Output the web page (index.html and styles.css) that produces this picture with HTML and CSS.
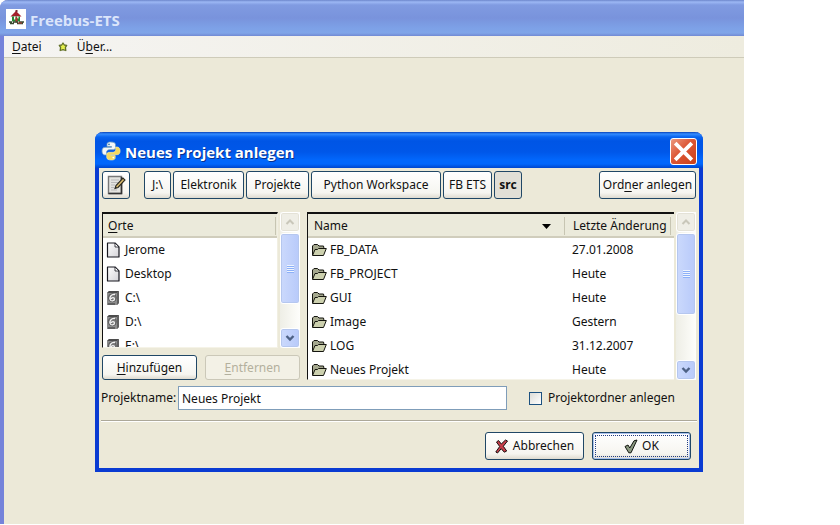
FILE: index.html
```html
<!DOCTYPE html>
<html lang="de">
<head>
<meta charset="utf-8">
<title>Freebus-ETS</title>
<link rel="stylesheet" href="styles.css">
</head>
<body>
<svg class="defs" aria-hidden="true">
  <linearGradient id="paper" x1="0" y1="0" x2="1" y2="1"><stop offset="0" stop-color="#fff"/><stop offset="1" stop-color="#d4d3d8"/></linearGradient>
  <symbol id="page" viewBox="0 0 14 16"><path d="M1.500 1H9l4 4v10H1.500z" fill="url(#paper)" stroke="#17171f" stroke-width="1.200" stroke-linejoin="round"/><path d="M9 1v4h4z" fill="#fff" stroke="#17171f" stroke-width=".8"/></symbol>
  <symbol id="disk" viewBox="0 0 14 16"><path d="M3 1h10v12l-2 2H1V3z" fill="#8c8c8c"/><path d="M1 3l2-2h10l-2 2z" fill="#4c4c4c"/><path d="M11 3l2-2v12l-2 2z" fill="#606060"/><circle cx="6.300" cy="7.800" r="4" fill="#777" stroke="#555" stroke-width=".8"/><path d="M9 4.500C5 4 3.400 7 4.200 9.600c.7 2 4.300 1.600 4.300-.6 0-1.900-3-1.800-3.300-.1" fill="none" stroke="#f3f3f3" stroke-width="1.300"/><path d="M2 14h7" stroke="#444" stroke-width="1.200"/></symbol>
  <symbol id="folder" viewBox="0 0 16 14"><path d="M1.500 12V3L3 1.500h3.500L8 3h4.500L13 5.500" fill="#a5a88e" stroke="#15150f" stroke-linejoin="round"/><path d="M1.500 12.500L4 6.500h2.500l1-1H15.300L12.500 12.500z" fill="#ccd0ae" stroke="#15150f" stroke-linejoin="round"/></symbol>
  <symbol id="up" viewBox="0 0 10 8"><path d="M1.500 6L5 2.500 8.500 6" fill="none" stroke="#c9c7ba" stroke-width="2"/></symbol>
  <symbol id="down" viewBox="0 0 10 8"><path d="M1.500 2L5 5.500 8.500 2" fill="none" stroke="#4d6185" stroke-width="2.400"/></symbol>
</svg>
<div class="app">
  <header class="app-title">
    <svg class="app-logo" viewBox="0 0 20 20" aria-hidden="true"><path fill="#fff" d="M0 0h20v20H0z"/><path d="M4.500 7.500L10 2l5.500 5.500z" fill="#a51f2c"/><path d="M9.500 1h2v2h-2z" fill="#7d2630"/><path d="M6 7.500h8v5H6z" fill="#258a32"/><path d="M8 7.500h1.500v3H8zM11 7.500h1.500v2H11z" fill="#fff"/><path d="M9.500 8.500h2v5h-2z" fill="#b92b31"/><path d="M3 13h3m1 0h5m1 0h5M4 14.500h4m3 0h6" stroke="#3b4931" stroke-width="1.300"/><path d="M12 14h4" stroke="#c13f37"/></svg>
    <h1>Freebus-ETS</h1>
  </header>
  <nav class="menu">
    <button type="button"><u>D</u>atei</button>
    <button type="button" class="about"><svg class="star" viewBox="0 0 10 10" aria-hidden="true"><path d="M5 1l1.300 2 2.400.4-1.300 2L7.800 8.500 5 7.700 2.200 8.500l.4-3.100-1.300-2L3.700 3z" fill="#e4f04c" stroke="#62702a" stroke-width="1.300" stroke-linejoin="round"/></svg><span>Ü<u>b</u>er...</span></button>
  </nav>
  <main class="workspace">
    <section class="dialog" role="dialog" aria-labelledby="dialog-title">
      <header class="dialog-title">
        <svg class="python" viewBox="0 0 20 20" aria-hidden="true"><path d="M9.800 1C6.500 1 6 2.300 6 3.500V5.500h4.500v.8H4C2 6.300 1 8 1 10s1 4 2.800 4H5.500v-2.500c0-1.600 1.200-2.800 2.800-2.800h4c1.300 0 2.200-1 2.200-2.200v-3C14.500 1.800 12.500 1 9.800 1z" fill="#f3f6f8" stroke="#6f9cc0" stroke-width=".8"/><path d="M10.400 19c3.300 0 3.800-1.300 3.800-2.500v-2H9.700v-.8h6.500c2 0 2.900-1.700 2.900-3.700s-1-4-2.800-4h-1.600v2.500c0 1.600-1.200 2.800-2.800 2.800h-4c-1.300 0-2.200 1-2.200 2.200v3c0 1.700 2 2.500 4.700 2.500z" fill="#f5d95e" stroke="#fff3ac" stroke-width=".6"/><circle cx="8" cy="3.300" r=".9" fill="#397ab0"/><circle cx="12.300" cy="16.600" r=".9" fill="#fff"/></svg>
        <h2 id="dialog-title">Neues Projekt anlegen</h2>
        <button type="button" class="close" aria-label="Schließen"><svg viewBox="0 0 24 24" aria-hidden="true"><path d="M4 4l16 16M20 4L4 20" stroke="#fff" stroke-width="3.600"/></svg></button>
      </header>
      <form class="dialog-body">
        <div class="toolbar">
          <button type="button" class="btn edit" aria-label="Dateiname eingeben"><svg viewBox="0 0 20 20" aria-hidden="true"><path d="M2.500 1.500h13v17h-13z" fill="#e4e4e0" stroke="#777" stroke-width="1.400"/><path d="M15.500 2v16.500h-13" fill="none" stroke="#333" stroke-width="1.600"/><path d="M5 5h8M5 7.500h7M5 10h4M5 12.500h3M5 15h6" stroke="#b9b9b9"/><path d="M9 13.500l1-3 7-7.500 2 2-7 7.500z" fill="#d7b96e" stroke="#282820" stroke-width="1.100"/><path d="M9 13.500l.6-2 1.400 1.300z" fill="#222"/></svg></button>
          <button type="button" class="btn p1">J:\</button>
          <button type="button" class="btn p2">Elektronik</button>
          <button type="button" class="btn p3">Projekte</button>
          <button type="button" class="btn p4">Python Workspace</button>
          <button type="button" class="btn p5">FB ETS</button>
          <button type="button" class="btn current">src</button>
          <button type="button" class="btn new-folder"><span>Ord<u>n</u>er anlegen</span></button>
        </div>
        <div class="panes">
          <div class="places">
            <div class="scroller">
              <div class="list">
                <table>
                  <thead><tr><th><span class="head"><span><u>O</u>rte</span></span></th></tr></thead>
                  <tbody>
                    <tr><td><span class="item"><svg class="place-icon"><use href="#page"/></svg>Jerome</span></td></tr>
                    <tr><td><span class="item"><svg class="place-icon"><use href="#page"/></svg>Desktop</span></td></tr>
                    <tr><td><span class="item"><svg class="place-icon"><use href="#disk"/></svg>C:\</span></td></tr>
                    <tr><td><span class="item"><svg class="place-icon"><use href="#disk"/></svg>D:\</span></td></tr>
                    <tr><td><span class="item"><svg class="place-icon"><use href="#disk"/></svg>E:\</span></td></tr>
                  </tbody>
                </table>
              </div>
              <div class="scrollbar">
                <button type="button" class="step off" aria-label="Nach oben"><svg><use href="#up"/></svg></button>
                <div class="thumb short"><i></i></div>
                <button type="button" class="step end" aria-label="Nach unten"><svg><use href="#down"/></svg></button>
              </div>
            </div>
            <div class="place-actions">
              <button type="button" class="btn"><span><u>H</u>inzufügen</span></button>
              <button type="button" class="btn" disabled><span><u>E</u>ntfernen</span></button>
            </div>
          </div>
          <div class="scroller files">
            <div class="list">
              <table>
                <thead><tr><th><span class="head">Name<svg class="sort" viewBox="0 0 9 5" aria-hidden="true"><path d="M0 0h9L4.500 5z"/></svg></span></th><th class="date"><span class="head">Letzte Änderung</span></th></tr></thead>
                <tbody>
                  <tr><td><span class="item"><svg class="folder"><use href="#folder"/></svg>FB_DATA</span></td><td class="when">27.01.2008</td></tr>
                  <tr><td><span class="item"><svg class="folder"><use href="#folder"/></svg>FB_PROJECT</span></td><td class="when">Heute</td></tr>
                  <tr><td><span class="item"><svg class="folder"><use href="#folder"/></svg>GUI</span></td><td class="when">Heute</td></tr>
                  <tr><td><span class="item"><svg class="folder"><use href="#folder"/></svg>Image</span></td><td class="when">Gestern</td></tr>
                  <tr><td><span class="item"><svg class="folder"><use href="#folder"/></svg>LOG</span></td><td class="when">31.12.2007</td></tr>
                  <tr><td><span class="item"><svg class="folder"><use href="#folder"/></svg>Neues Projekt</span></td><td class="when">Heute</td></tr>
                </tbody>
              </table>
            </div>
            <div class="scrollbar">
              <button type="button" class="step off" aria-label="Nach oben"><svg><use href="#up"/></svg></button>
              <div class="thumb"><i></i></div>
              <button type="button" class="step end" aria-label="Nach unten"><svg><use href="#down"/></svg></button>
            </div>
          </div>
        </div>
        <div class="fields">
          <label class="name-label" for="project-name">Projektname:</label>
          <input class="name" id="project-name" type="text" value="Neues Projekt">
          <div class="check"><input type="checkbox" id="make-folder"><label for="make-folder">Projektordner anlegen</label></div>
        </div>
        <hr>
        <div class="actions">
          <button type="button" class="btn"><svg viewBox="0 0 14 15" aria-hidden="true"><path d="M3.500 1.500L6.300 5 10.500 1l2 1L8.300 7.300l3.400 4.700-2.400 1.200L6.200 9.700 2.500 14l-1.700-1L4.700 7.500 1.500 3z" fill="#c93f4b" stroke="#171011" stroke-linejoin="round"/></svg>Abbrechen</button>
          <button type="submit" class="btn default"><svg viewBox="0 0 14 15" aria-hidden="true"><path d="M1 7.500l3-1.500 1.800 3L10 1.800l3-.8L7 13.800H4.800z" fill="#8b9981" stroke="#12150f" stroke-linejoin="round"/></svg>OK</button>
        </div>
      </form>
    </section>
  </main>
</div>
</body>
</html>
```
FILE: styles.css
```css
* { box-sizing: border-box; }
body {
  margin: 0;
  background: #fff;
  color: #111;
  font: 12px/16px "Noto Sans", "Open Sans", sans-serif;
}
button, input { font: inherit; color: inherit; }
button { padding: 0; border: 0; background: none; white-space: nowrap; }
u { text-underline-offset: 2px; }
.defs { position: absolute; width: 0; height: 0; }

.app {
  display: flex;
  flex-direction: column;
  min-height: calc(100vh - 1px);
  margin-right: 96px;
  background: #ece9d8;
  border-left: 4px solid #7583da;
  border-top-left-radius: 8px;
}
.app-title {
  display: flex;
  align-items: center;
  gap: 4px;
  height: 36px;
  margin-left: -4px;
  padding: 2px 6px 0;
  border-top-left-radius: 8px;
  background: linear-gradient(#6d86cb 0, #9cb7f4 2px, #809be1 5px, #7993dc 18px, #7da1e7 28px, #80a5e8 33px, #7189d3 36px);
}
.app-logo { width: 20px; height: 20px; }
h1, h2 { margin: 0; padding-top: 2px; font: bold 15px/20px "Open Sans", "Noto Sans", sans-serif; }
h1 { color: #dbe5fb; }
.menu {
  display: flex;
  gap: 16px;
  height: 22px;
  padding: 0 8px;
  border-bottom: 1px solid #cecbb9;
  background: linear-gradient(90deg, #f5f4f2, #eeecdf);
}
.about { display: flex; align-items: center; gap: 9px; }
.star { width: 10px; height: 10px; }
.workspace { flex: 1; padding: 74px 41px 20px 91px; }

.dialog {
  border: 4px solid #0a3bd2;
  border-width: 0 4px 4px;
  border-radius: 8px 8px 0 0;
  background: #ece9d8;
}
.dialog-title {
  display: flex;
  align-items: center;
  gap: 4px;
  height: 36px;
  margin: 0 -4px;
  padding: 2px 6px 0;
  border-radius: 8px 8px 0 0;
  background: linear-gradient(#0842b8 0, #348cff 2px, #0864ef 5px, #0055e5 9px, #0057e9 20px, #0267fc 28px, #0267fc 32px, #0046cd 36px);
}
.python { width: 20px; height: 20px; }
h2 { color: #fff; text-shadow: 1px 1px #08308c; }
.close {
  width: 27px;
  height: 27px;
  margin-left: auto;
  border: 1px solid #fff;
  border-radius: 3px;
  background: linear-gradient(135deg, #ec9a80, #dc5635 45%, #cb4018);
}
.close svg { display: block; width: 25px; height: 25px; }
.dialog-body { padding: 3px 3px 8px; }

.btn {
  display: flex;
  align-items: center;
  justify-content: center;
  gap: 4px;
  height: 28px;
  border: 1px solid #204766;
  border-radius: 3px;
  background: linear-gradient(#fff, #f6f5f0 80%, #dfdbd0);
}
.btn:disabled { color: #b3b09d; border-color: #cbc8b8; background: #f3f1e6; }
.toolbar { display: flex; gap: 2px; }
.edit { width: 28px; margin-right: 12px; }
.edit svg { width: 20px; height: 20px; }
.p1 { width: 27px; }
.p2 { width: 71px; }
.p3 { width: 63px; }
.p4 { width: 130px; }
.p5 { width: 49px; }
.current { width: 28px; font-weight: bold; background: #e1dfd6; }
.new-folder { width: 97px; margin-left: auto; }

.panes { display: grid; grid-template-columns: 198px 1fr; gap: 7px; margin-top: 13px; }
.scroller { display: flex; gap: 2px; height: 168px; }
.places .scroller { height: 136px; }
.list {
  flex: 1;
  overflow: hidden;
  border: 1px solid #111;
  border-width: 2px 0 1px 1px;
  border-bottom-color: #f5f3e7;
  background: #fff;
}
.places .list { border-right: 1px solid #f1efe2; }
table { width: 100%; border-collapse: collapse; table-layout: fixed; }
th, td { height: 24px; padding: 0; font-weight: normal; text-align: left; }
th { background: #ebeadb; box-shadow: inset 0 -2px #d0cdbc; }
.head {
  display: flex;
  align-items: center;
  justify-content: space-between;
  height: 18px;
  padding: 0 13px 0 6px;
  border-right: 1px solid #c7c5b2;
  white-space: nowrap;
}
.date { width: 109px; }
.date .head { margin-right: 3px; padding: 0 0 0 8px; }
.places .head { margin-right: 1px; padding-left: 5px; }
.sort { width: 9px; height: 5px; }
.item { display: flex; align-items: center; gap: 5px; padding-left: 3px; }
.files .item { gap: 3px; }
.when { padding-left: 7px; }
.place-icon { width: 14px; height: 16px; }
.folder { width: 16px; height: 14px; }
.scrollbar {
  display: flex;
  flex-direction: column;
  gap: 1px;
  width: 20px;
  background: linear-gradient(90deg, #eeeee6, #fefefb);
}
.step, .thumb {
  display: flex;
  align-items: center;
  justify-content: center;
  border: 1px solid #fff;
  border-radius: 3px;
  background: linear-gradient(90deg, #cbd9fc, #b8cafa);
  box-shadow: inset 0 0 0 1px #b5c7ef;
}
.step { height: 20px; }
.step svg { width: 10px; height: 8px; }
.off { background: #efeee6; box-shadow: inset 0 0 0 1px #e4e2d7; }
.end { margin-top: auto; }
.thumb { height: 82px; }
.short { height: 71px; }
.thumb i { width: 7px; height: 8px; background: repeating-linear-gradient(#eef4fe 0 1px, #8cb0f8 1px 2px); }
.place-actions { display: grid; grid-template-columns: 1fr 1fr; gap: 8px; margin-top: 7px; }
.place-actions .btn { height: 25px; }

.fields { display: flex; align-items: center; margin-top: 6px; }
.name-label { flex: none; width: 76px; margin-left: -1px; white-space: nowrap; }
.name {
  flex: 1;
  min-width: 0;
  height: 24px;
  margin-left: 1px;
  padding: 0 3px;
  border: 1px solid #7f9db9;
  border-radius: 0;
  background: #fff;
}
.check { display: flex; align-items: center; gap: 6px; width: 167px; margin-left: 22px; white-space: nowrap; }
.check input {
  appearance: none;
  width: 13px;
  height: 13px;
  margin: 0;
  border: 1px solid #1c5180;
  background: linear-gradient(135deg, #dcdcd7, #fff);
}
hr { height: 2px; margin: 10px -1px; border: 0; border-top: 1px solid #aca899; background: #fff; }
.actions { display: flex; justify-content: flex-end; gap: 8px; padding-right: 5px; }
.actions .btn { width: 99px; }
.actions svg { width: 14px; height: 15px; }
.default { box-shadow: inset 0 0 0 1px #a9c2f1; outline: 1px dotted #223c83; outline-offset: -4px; }
```
